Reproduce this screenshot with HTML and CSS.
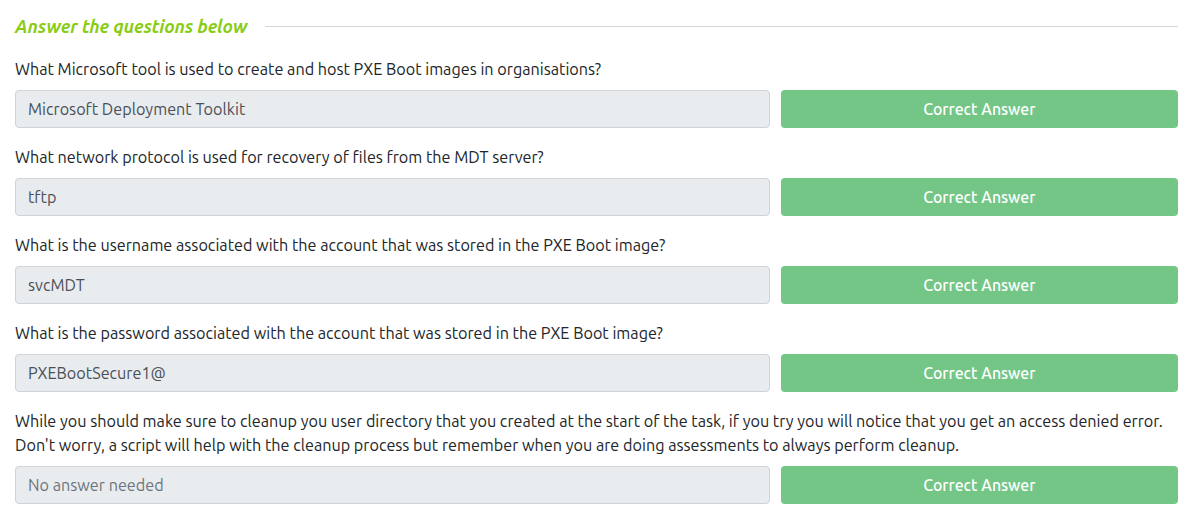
FILE: index.html
```html
<!DOCTYPE html>
<html>
<head>
<meta charset="utf-8">
<link rel="stylesheet" href="styles.css">
</head>
<body>
<div class="panel">
  <div class="heading">
    <span class="heading-text">Answer the questions below</span>
    <span class="heading-rule"></span>
  </div>
  <div class="question">
    <p class="q-text">What Microsoft tool is used to create and host PXE Boot images in organisations?</p>
    <div class="answer-row">
      <div class="answer-input">Microsoft Deployment Toolkit</div>
      <div class="answer-btn">Correct Answer</div>
    </div>
  </div>
  <div class="question">
    <p class="q-text">What network protocol is used for recovery of files from the MDT server?</p>
    <div class="answer-row">
      <div class="answer-input">tftp</div>
      <div class="answer-btn">Correct Answer</div>
    </div>
  </div>
  <div class="question">
    <p class="q-text">What is the username associated with the account that was stored in the PXE Boot image?</p>
    <div class="answer-row">
      <div class="answer-input">svcMDT</div>
      <div class="answer-btn">Correct Answer</div>
    </div>
  </div>
  <div class="question">
    <p class="q-text">What is the password associated with the account that was stored in the PXE Boot image?</p>
    <div class="answer-row">
      <div class="answer-input">PXEBootSecure1@</div>
      <div class="answer-btn">Correct Answer</div>
    </div>
  </div>
  <div class="question">
    <p class="q-text">While you should make sure to cleanup you user directory that you created at the start of the task, if you try you will notice that you get an access denied error.<br>Don't worry, a script will help with the cleanup process but remember when you are doing assessments to always perform cleanup.</p>
    <div class="answer-row">
      <div class="answer-input placeholder">No answer needed</div>
      <div class="answer-btn">Correct Answer</div>
    </div>
  </div>
</div>
</body>
</html>
```
FILE: styles.css
```css
html, body {
  margin: 0;
  padding: 0;
  background: #ffffff;
}
body {
  font-family: "Ubuntu", "Noto Sans", "Open Sans", sans-serif;
  font-size: 16.2px;
  color: #212529;
}
.panel {
  padding: 14px 10px 0 15px;
}
.heading {
  display: flex;
  align-items: center;
  height: 24px;
  margin-bottom: 19px;
}
.heading-text {
  font-size: 18px;
  font-weight: 700;
  font-style: italic;
  color: #88cc14;
  white-space: nowrap;
  letter-spacing: -0.1px;
}
.heading-rule {
  flex: 1;
  height: 1px;
  background: #d6d6d6;
  margin-left: 18px;
}
.question {
  margin-bottom: 17px;
}
.q-text {
  margin: 0 0 9px 0;
  line-height: 24px;
}
.answer-row {
  display: grid;
  grid-template-columns: 756fr 398fr;
  column-gap: 11px;
}
.answer-input {
  box-sizing: border-box;
  height: 38px;
  background: #e9ecef;
  border: 1px solid #ced4da;
  border-radius: 4px;
  padding: 0 12px;
  display: flex;
  align-items: center;
  color: #495057;
}
.answer-input.placeholder {
  color: #6c757d;
}
.answer-btn {
  height: 38px;
  border-radius: 4px;
  background: #73c686;
  color: #ffffff;
  font-size: 15.8px;
  font-weight: 500;
  display: flex;
  align-items: center;
  justify-content: center;
}
```
